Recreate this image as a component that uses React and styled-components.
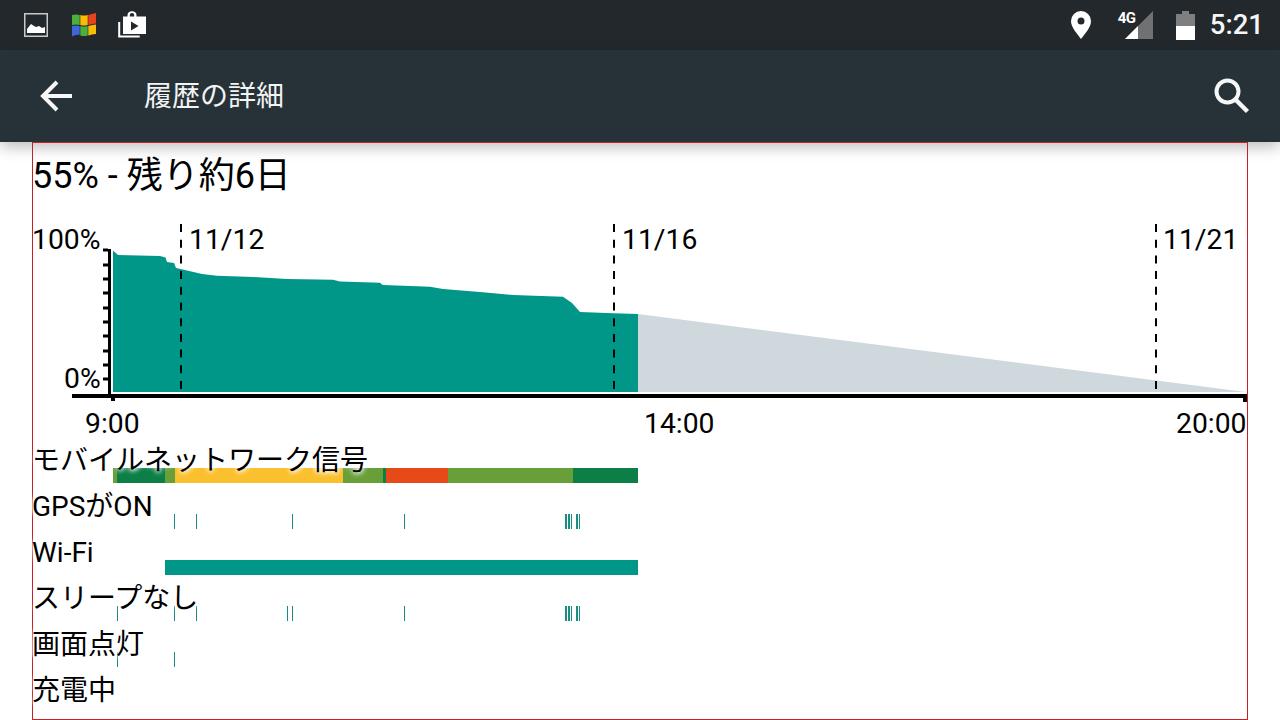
import styled, { createGlobalStyle } from 'styled-components';

const FONT = `Roboto, "Noto Sans CJK JP", sans-serif`;

const GlobalStyle = createGlobalStyle`
  html, body {
    margin: 0;
    padding: 0;
    background: #fff;
  }
`;

const Page = styled.div`
  width: 1280px;
  height: 720px;
  overflow: hidden;
  display: flex;
  flex-direction: column;
  font-family: ${FONT};
  color: #000;
`;

const StatusBar = styled.div`
  height: 50px;
  flex: none;
  background: #22282c;
  display: flex;
  align-items: center;
  justify-content: space-between;
  padding: 0 16px 0 24px;
`;
const StatusGroup = styled.div`
  display: flex;
  align-items: center;
  gap: ${(p) => p.$gap}px;
`;
const PlayIcon = styled.svg`
  margin-left: -2px;
`;
const Clock = styled.span`
  color: #f4f5f5;
  font-size: 27.5px;
  font-weight: 500;
  line-height: 50px;
  margin-left: -8px;
`;
const NetworkIcon = styled.div`
  position: relative;
  width: 35px;
  height: 28px;
  margin-left: 4px;
`;
const NetworkType = styled.span`
  position: absolute;
  left: 0;
  top: -1px;
  color: #fff;
  font-size: 15px;
  font-weight: 700;
  line-height: 16px;
  letter-spacing: -0.6px;
`;

const Toolbar = styled.header`
  height: 92px;
  flex: none;
  background: #273238;
  display: flex;
  align-items: center;
  padding: 0 29px 0 38px;
  box-shadow: 0 5px 14px rgba(0, 0, 0, 0.26);
  position: relative;
  z-index: 1;
`;
const ToolbarTitle = styled.h1`
  flex: 1;
  margin: 0 0 4px 70px;
  color: #f2f3f3;
  font-size: 28px;
  font-weight: 400;
`;

const Panel = styled.main`
  height: 578px;
  margin: 0 32px;
  border: 1px solid #c62026;
  box-sizing: border-box;
  position: relative;
  z-index: 2;
`;
const Summary = styled.div`
  height: 77px;
  margin-left: -1px;
  font-size: 36px;
  line-height: 66px;
  white-space: nowrap;
`;

const Chart = styled.div`
  position: relative;
  height: 220px;
  padding-top: 4px;
  box-sizing: border-box;
  display: flex;
  flex-direction: column;
  font-size: 28.3px;
  line-height: 32px;
`;
const ChartDrawing = styled.svg`
  position: absolute;
  left: 0;
  top: 0;
`;
const DateRow = styled.div`
  position: relative;
  display: grid;
  grid-template-columns: 157px 433px 541px auto;
  margin-left: -1px;
  height: 32px;
`;
const ZeroLabel = styled.div`
  position: relative;
  margin: 107px 0 0 31px;
  height: 32px;
`;
const HourRow = styled.div`
  position: relative;
  display: grid;
  grid-template-columns: 559px 532px auto;
  margin: 13px 0 0 52px;
  height: 32px;
  white-space: nowrap;
`;

const Row = styled.div`
  height: 46px;
  display: flex;
  flex-direction: column;
`;
const RowLabel = styled.div`
  position: relative;
  z-index: 1;
  height: 28px;
  margin-left: -1px;
  font-size: 28px;
  line-height: 42px;
  white-space: nowrap;
  text-shadow: 0 0 5px #fff, 0 0 5px #fff, 0 0 7px #fff;
`;
const Track = styled.div`
  position: relative;
  margin-left: 80px;
  width: 525px;
  height: 15px;
  display: flex;
`;
const Segment = styled.div`
  flex: none;
  height: 100%;
  background: ${(p) => p.$color};
`;
const Tick = styled.div`
  position: absolute;
  top: 0;
  bottom: 0;
  background: #1a8c82;
`;

const TEAL = '#009688';
const LIGHT = '#689f38';
const DARK = '#0b7f45';
const YELLOW = '#fbc02d';
const ORANGE = '#e64a19';

const SIGNAL = [
  [113, 117, LIGHT],
  [117, 165, DARK],
  [165, 175, LIGHT],
  [175, 343, YELLOW],
  [343, 383, LIGHT],
  [383, 386, DARK],
  [386, 448, ORANGE],
  [448, 573, LIGHT],
  [573, 638, DARK],
];

const BURST = [[565, 2], [568, 2], [571, 1], [576, 2], [579, 1]];
const GPS_TICKS = [[174, 1], [196, 1], [292, 1], [404, 1], ...BURST];
const AWAKE_TICKS = [[117, 1], [174, 1], [196, 1], [287, 1], [292, 1], [404, 1], ...BURST];
const SCREEN_TICKS = [[117, 1], [174, 1]];

const LEVEL =
  '113,250.5 118,255 160,256 165.5,257.5 167,262 174,263 176,268 187,270.5 202,274 217,275.7 ' +
  '253,277 287,279 333,279.7 340,281.5 380,282.7 382.7,285 430,286.7 443,289 480,292 513,295 ' +
  '563,296.7 572,303 580,312 613,313.3 638,314';

const Y_TICKS = [250, 265, 279, 293, 308, 322, 336, 351, 365, 379];

function BatteryChart() {
  return (
    <Chart>
      <ChartDrawing width="1214" height="220" viewBox="33 220 1214 220">
        <polygon points={`${LEVEL} 638,392 113,392`} fill={TEAL} />
        <polygon points="638,314 1246,392 638,392" fill="#cfd8dc" />
        {[181, 614, 1156].map((x) => (
          <line key={x} x1={x} x2={x} y1="224" y2="392" stroke="#000" strokeWidth="2" strokeDasharray="8 7.7" />
        ))}
        <rect x="108" y="249" width="3" height="148" fill="#000" />
        {Y_TICKS.map((y) => (
          <rect key={y} x="103" y={y - 1.5} width="5" height="3" fill="#000" />
        ))}
        <rect x="72" y="394" width="1175" height="4" fill="#000" />
        <rect x="111" y="398" width="4" height="3" fill="#000" />
        <rect x="1243" y="398" width="4" height="4" fill="#000" />
      </ChartDrawing>
      <DateRow>
        <span>100%</span>
        <span>11/12</span>
        <span>11/16</span>
        <span>11/21</span>
      </DateRow>
      <ZeroLabel>0%</ZeroLabel>
      <HourRow>
        <span>9:00</span>
        <span>14:00</span>
        <span>20:00</span>
      </HourRow>
    </Chart>
  );
}

function Ticks({ items }) {
  return (
    <Track>
      {items.map(([x, w]) => (
        <Tick key={x} style={{ left: x - 113, width: w }} />
      ))}
    </Track>
  );
}

export default function App() {
  return (
    <Page>
      <GlobalStyle />
      <StatusBar>
        <StatusGroup $gap={24}>
          <svg width="24" height="24" viewBox="0 0 24 24">
            <rect x="0.75" y="0.75" width="22.5" height="22.5" fill="none" stroke="#c9cacb" strokeWidth="1.5" />
            <path d="M3 20v-4l4-5 3 2 2 1 3-1 3 2 3-1v6z" fill="#fff" />
          </svg>
          <svg width="24" height="24" viewBox="0 0 24 24">
            <path d="M0 2c3-.8 5-.8 7.700 0v10c-2.700-.8-4.700-.8-7.700 0z" fill="#4caf3c" />
            <path d="M8.300 2c2.700.8 4.700.8 7.400 0v10c-2.700.8-4.700.8-7.400 0z" fill="#fbbc05" />
            <path d="M16.300 2c2.700-.8 4.700-1 7.700-2v10.500c-3 .5-5 .7-7.700 1.500z" fill="#e8431f" />
            <path d="M0 13c3-.8 5-.8 7.700 0v9c-2.700-.8-4.700 0-7.700 1.500z" fill="#3f67d6" />
            <path d="M8.300 13c2.700.8 4.700.8 7.400 0v9.500c-2.700.8-4.700.8-7.400 0z" fill="#4caf3c" />
            <path d="M16.300 13c2.700-.8 4.700-1 7.700-1.500v9.500c-3 .3-5 .8-7.700 1.500z" fill="#fbbc05" />
          </svg>
          <PlayIcon width="28" height="28" viewBox="0 0 28 28">
            <path d="M1.200 11v14.500h20.500" fill="none" stroke="#fff" strokeWidth="2" />
            <path d="M5 5.500h4.500V4a4.500 3.800 0 0 1 9 0v1.500H28V23H5z" fill="#fff" />
            <path d="M11.800 5.500V4a2.200 1.900 0 0 1 4.400 0v1.500z" fill="#22282c" />
            <path d="M13 10.500l7.500 4.500-7.500 4.500z" fill="#22282c" />
          </PlayIcon>
        </StatusGroup>
        <StatusGroup $gap={23}>
          <svg width="20" height="28" viewBox="0 0 20 28">
            <path
              fillRule="evenodd"
              d="M10 0a10 10 0 0 1 10 10c0 6.500-6 12.500-10 18C6 22.500 0 16.500 0 10A10 10 0 0 1 10 0zm0 6.500a3.500 3.500 0 1 0 0 7 3.500 3.500 0 0 0 0-7z"
              fill="#fff"
            />
          </svg>
          <NetworkIcon>
            <NetworkType>4G</NetworkType>
            <svg width="35" height="28" viewBox="0 0 35 28">
              <polygon points="35,0 35,28 7,28" fill="#6f7173" />
              <polygon points="20,15 20,28 7,28" fill="#fff" />
            </svg>
          </NetworkIcon>
          <svg width="19" height="29" viewBox="0 0 19 29">
            <path d="M6 0h7v3h6v12H0V3h6z" fill="#7d7f81" />
            <rect y="15" width="19" height="14" fill="#fff" />
          </svg>
          <Clock>5:21</Clock>
        </StatusGroup>
      </StatusBar>
      <Toolbar>
        <svg width="36" height="34" viewBox="0 0 36 34">
          <path d="M34 17H5M19 3L5 17l14 14" fill="none" stroke="#f6f6f6" strokeWidth="4" />
        </svg>
        <ToolbarTitle>履歴の詳細</ToolbarTitle>
        <svg width="38" height="38" viewBox="0 0 38 38">
          <circle cx="14.500" cy="14.500" r="11" fill="none" stroke="#f6f6f6" strokeWidth="4" />
          <path d="M22.500 22.500L34.500 34.500" stroke="#f6f6f6" strokeWidth="4.500" />
        </svg>
      </Toolbar>
      <Panel>
        <Summary>55% - 残り約6日</Summary>
        <BatteryChart />
        <Row>
          <RowLabel>モバイルネットワーク信号</RowLabel>
          <Track>
            {SIGNAL.map(([from, to, color]) => (
              <Segment key={from} $color={color} style={{ width: to - from }} />
            ))}
          </Track>
        </Row>
        <Row>
          <RowLabel>GPSがON</RowLabel>
          <Ticks items={GPS_TICKS} />
        </Row>
        <Row>
          <RowLabel>Wi-Fi</RowLabel>
          <Track>
            <Segment $color={TEAL} style={{ marginLeft: 52, width: 473 }} />
          </Track>
        </Row>
        <Row>
          <RowLabel>スリープなし</RowLabel>
          <Ticks items={AWAKE_TICKS} />
        </Row>
        <Row>
          <RowLabel>画面点灯</RowLabel>
          <Ticks items={SCREEN_TICKS} />
        </Row>
        <Row>
          <RowLabel>充電中</RowLabel>
        </Row>
      </Panel>
    </Page>
  );
}
